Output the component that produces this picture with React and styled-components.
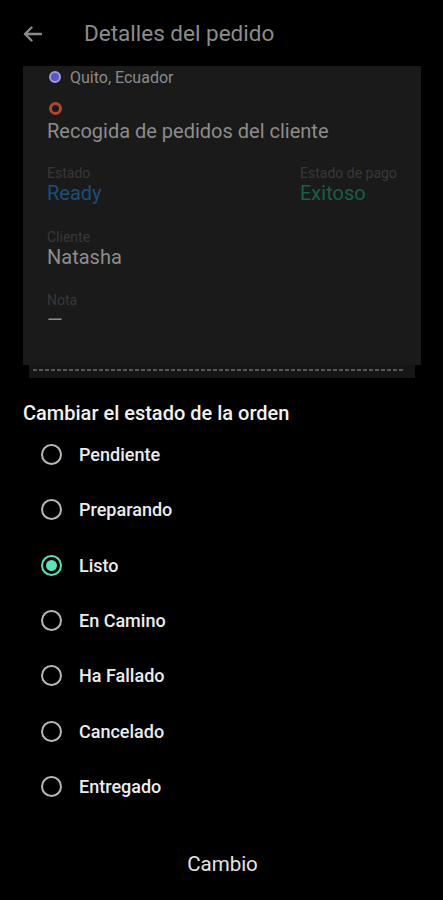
import React, { useState } from "react";
import styled, { createGlobalStyle } from "styled-components";

const Global = createGlobalStyle`
  html, body { margin: 0; padding: 0; background: #000; }
  body { font-family: Roboto, "Noto Sans", sans-serif; -webkit-font-smoothing: antialiased; }
  * { box-sizing: border-box; }
`;

const Page = styled.div`
  width: 443px;
  height: 900px;
  background: #000;
  display: flex;
  flex-direction: column;
  overflow: hidden;
`;

const Header = styled.div`
  height: 66px;
  display: flex;
  align-items: center;
  padding: 0 0 0 23px;
  gap: 42px;
`;

const BackButton = styled.button`
  background: none;
  border: 0;
  padding: 0;
  width: 19px;
  height: 16px;
  display: flex;
  color: #8a8a8a;
  margin-top: 2px;
`;

const Title = styled.h1`
  margin: 0;
  font-size: 22.5px;
  font-weight: 400;
  color: #8c8c8c;
`;

const Card = styled.div`
  margin: 0 22px 0 23px;
  display: flex;
  flex-direction: column;
`;

const CardBody = styled.div`
  background: #1a1a1a;
  padding: 0 24px 33px 24px;
  display: flex;
  flex-direction: column;
`;

const Tear = styled.div`
  margin: 0 6px;
  height: 13px;
  background: #161616;
  display: flex;
  align-items: flex-start;
  padding: 4px 10px 0 4px;
`;

const Dashes = styled.div`
  flex: 1;
  height: 2px;
  background-image: linear-gradient(to right, #575757 0 4px, transparent 4px 6px);
  background-size: 6px 2px;
`;

const LocationRow = styled.div`
  height: 22px;
  display: flex;
  align-items: center;
  gap: 9px;
  font-size: 16px;
  color: #8a8a8a;
  padding-left: 2px;
`;

const Dot = styled.span`
  width: ${(p) => (p.$ring ? 13 : 12)}px;
  height: ${(p) => (p.$ring ? 13 : 12)}px;
  border-radius: 50%;
  flex: none;
  background: ${(p) => (p.$ring ? "transparent" : "#5a55c8")};
  border: ${(p) => (p.$ring ? "3px solid #b0472c" : "2px solid #9c9cd6")};
`;

const RingRow = styled.div`
  margin-top: 14px;
  height: 13px;
  display: flex;
  padding-left: 1.5px;
`;

const PlaceTitle = styled.div`
  margin-top: 4px;
  font-size: 20px;
  line-height: 24px;
  color: #8c8c8c;
`;

const FieldGrid = styled.div`
  display: grid;
  grid-template-columns: 253px 1fr;
  margin-top: ${(p) => p.$mt}px;
`;

const Field = styled.div`
  display: flex;
  flex-direction: column;
`;

const Label = styled.span`
  font-size: 14px;
  line-height: 16px;
  color: #383838;
`;

const Value = styled.span`
  font-size: 20px;
  line-height: 24px;
  color: ${(p) => p.$color || "#8d8d8d"};
`;

const Sheet = styled.div`
  flex: 1;
  display: flex;
  flex-direction: column;
  padding-top: 23px;
`;

const SheetTitle = styled.h2`
  margin: 0 0 0 23px;
  font-size: 20px;
  line-height: 24px;
  font-weight: 500;
  color: #f2f2f2;
`;

const RadioList = styled.div`
  display: flex;
  flex-direction: column;
  padding-top: 2px;
`;

const RadioRow = styled.label`
  height: 55.3px;
  display: flex;
  align-items: center;
  padding-left: 41px;
  gap: 17px;
  cursor: pointer;
`;

const RadioCircle = styled.span`
  width: 21px;
  height: 21px;
  border-radius: 50%;
  border: 2px solid ${(p) => (p.$on ? "#5fe0b9" : "#b8b8b8")};
  display: flex;
  align-items: center;
  justify-content: center;
  &::after {
    content: "";
    width: 11px;
    height: 11px;
    border-radius: 50%;
    background: #5fe0b9;
    display: ${(p) => (p.$on ? "block" : "none")};
  }
`;

const RadioText = styled.span`
  font-size: 18px;
  font-weight: 500;
  color: #ececec;
`;

const SubmitButton = styled.button`
  margin: 38px auto 0;
  background: none;
  border: 0;
  font-family: Roboto, "Noto Sans", sans-serif;
  font-size: 20.5px;
  line-height: 24px;
  color: #e4e4e4;
  padding: 0;
  transform: translateX(1px);
`;

const options = [
  "Pendiente",
  "Preparando",
  "Listo",
  "En Camino",
  "Ha Fallado",
  "Cancelado",
  "Entregado",
];

export default function App() {
  const [sel, setSel] = useState("Listo");
  return (
    <Page>
      <Global />
      <Header>
        <BackButton aria-label="Atrás">
          <svg width="19" height="16" viewBox="0 0 19 16" fill="none" stroke="currentColor" strokeWidth="2.4" strokeLinecap="round" strokeLinejoin="round">
            <path d="M18 8H2M8.5 1.5L2 8l6.5 6.5" />
          </svg>
        </BackButton>
        <Title>Detalles del pedido</Title>
      </Header>
      <Card>
        <CardBody>
          <LocationRow>
            <Dot />
            Quito, Ecuador
          </LocationRow>
          <RingRow>
            <Dot $ring />
          </RingRow>
          <PlaceTitle>Recogida de pedidos del cliente</PlaceTitle>
          <FieldGrid $mt={22}>
            <Field>
              <Label>Estado</Label>
              <Value $color="#1b4e7b">Ready</Value>
            </Field>
            <Field>
              <Label>Estado de pago</Label>
              <Value $color="#175f48">Exitoso</Value>
            </Field>
          </FieldGrid>
          <FieldGrid $mt={24}>
            <Field>
              <Label>Cliente</Label>
              <Value>Natasha</Value>
            </Field>
          </FieldGrid>
          <FieldGrid $mt={23}>
            <Field>
              <Label>Nota</Label>
              <Value>—</Value>
            </Field>
          </FieldGrid>
        </CardBody>
        <Tear>
          <Dashes />
        </Tear>
      </Card>
      <Sheet>
        <SheetTitle>Cambiar el estado de la orden</SheetTitle>
        <RadioList>
          {options.map((o) => (
            <RadioRow key={o} onClick={() => setSel(o)}>
              <RadioCircle $on={sel === o} />
              <RadioText>{o}</RadioText>
            </RadioRow>
          ))}
        </RadioList>
        <SubmitButton>Cambio</SubmitButton>
      </Sheet>
    </Page>
  );
}
